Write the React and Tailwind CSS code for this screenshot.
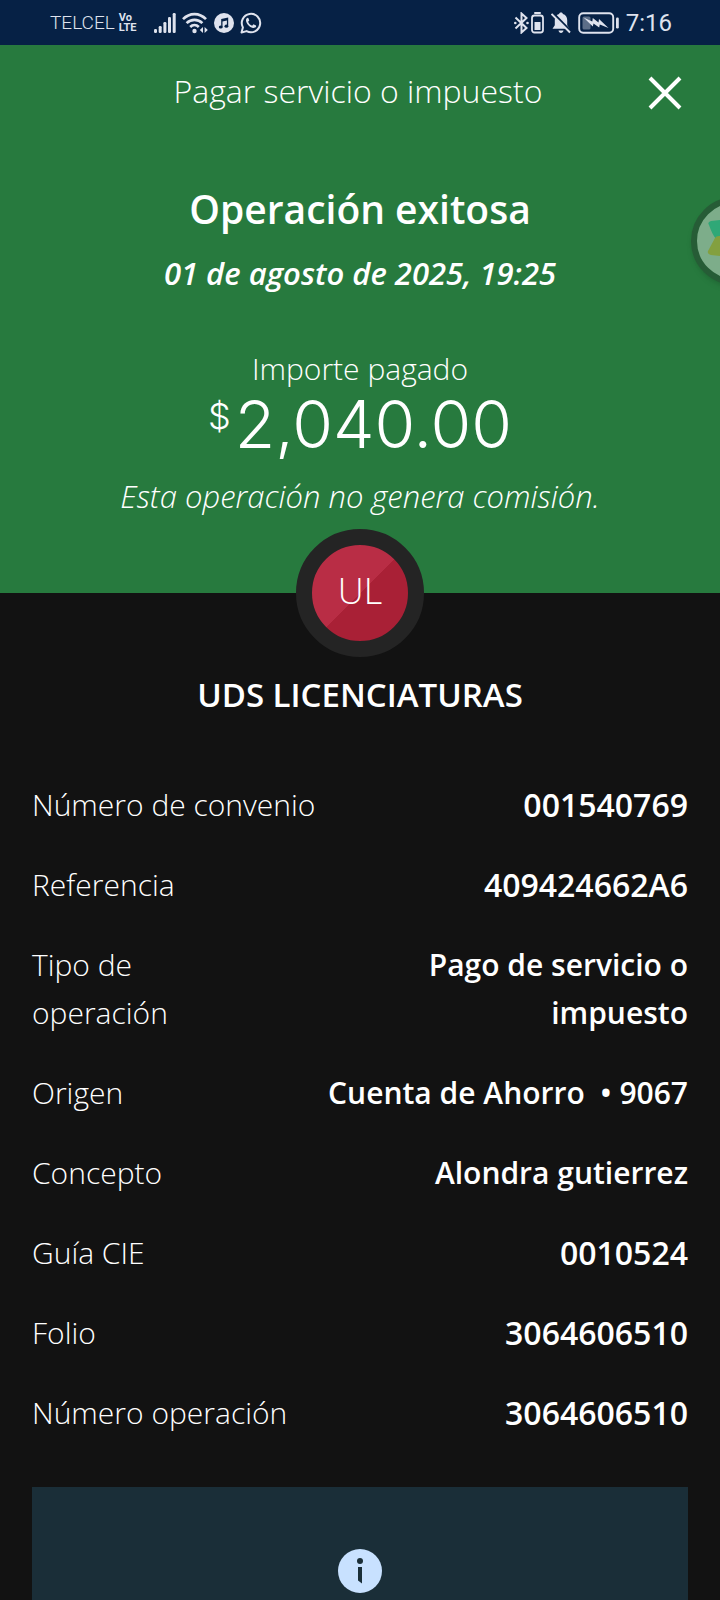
import React from "react";
import clsx from "clsx";

const details = [
  { label: "Número de convenio", value: "001540769", numeric: true },
  { label: "Referencia", value: "409424662A6", numeric: true },
  { label: "Tipo de operación", value: "Pago de servicio o impuesto" },
  { label: "Origen", value: "Cuenta de Ahorro \u00a0• 9067" },
  { label: "Concepto", value: "Alondra gutierrez" },
  { label: "Guía CIE", value: "0010524", numeric: true },
  { label: "Folio", value: "3064606510", numeric: true },
  { label: "Número operación", value: "3064606510", numeric: true },
];

function SignalIcon() {
  return (
    <svg width="22" height="22" viewBox="0 0 22 22" fill="currentColor">
      <rect x="0" y="17" width="3" height="4" rx="1.2" />
      <rect x="4.7" y="14" width="3" height="7" rx="1.2" />
      <rect x="9.4" y="10" width="3" height="11" rx="1.2" />
      <rect x="14" y="5" width="3" height="16" rx="1.2" />
      <rect x="18.7" y="1" width="3" height="20" rx="1.2" />
    </svg>
  );
}

function WifiIcon() {
  return (
    <svg width="26" height="22" viewBox="0 0 26 22" fill="none" stroke="currentColor" strokeWidth="2.6">
      <path d="M1 7.2C7.5.4 17.5.4 24 7.2" />
      <path d="M4.6 11.2c4.5-4.5 11.3-4.5 15.8 0" />
      <path d="M8.2 15c2.5-2.6 6.1-2.6 8.6 0" />
      <circle cx="12.5" cy="19" r="2.2" fill="currentColor" stroke="none" />
      <path d="M21 15v6l-3.2-3zM22.6 15v6l3.2-3z" fill="currentColor" stroke="none" />
    </svg>
  );
}

function MusicIcon() {
  return (
    <svg width="20" height="22" viewBox="0 0 20 22">
      <circle cx="10" cy="11" r="10" fill="currentColor" />
      <g fill="#062145">
        <path d="M7.2 7l7-1.6v8.8h-1.3V8.6l-4.4 1v5.8H7.2z" />
        <ellipse cx="6.7" cy="15" rx="1.9" ry="1.6" />
        <ellipse cx="12.4" cy="14.2" rx="1.9" ry="1.6" />
      </g>
    </svg>
  );
}

function WhatsAppIcon() {
  return (
    <svg width="22" height="22" viewBox="0 0 22 22" fill="none" stroke="currentColor" strokeWidth="2">
      <path d="M1.5 20.5l1.4-5.1A9.2 9.2 0 1 1 6.6 19.1z" strokeLinejoin="round" />
      <path
        d="M7.5 5.8c-1.4.7-1.9 2.3-1.2 4.1 1 2.7 3.2 4.9 5.9 5.9 1.8.6 3.4 0 4-1.3l-.2-1-2.5-1.2-1.4 1.4c-1.9-.8-3.3-2.2-4-4l1.2-1.3-1-2.5z"
        fill="currentColor"
        stroke="none"
      />
    </svg>
  );
}

function BluetoothIcon() {
  return (
    <svg width="15" height="22" viewBox="0 0 15 22" fill="none" stroke="currentColor" strokeWidth="2">
      <path d="M1.5 5.5l11 10.5L7.5 20.5v-19L12.5 6l-11 10.5" />
      <circle cx="1.3" cy="11" r="1.3" fill="currentColor" stroke="none" />
      <circle cx="13.5" cy="11" r="1.3" fill="currentColor" stroke="none" />
    </svg>
  );
}

function DeviceBatteryIcon() {
  return (
    <svg width="13" height="22" viewBox="0 0 13 22">
      <rect x="3" y="0" width="7" height="2" rx="1" fill="currentColor" />
      <rect x="1" y="3.5" width="11" height="17" rx="2.5" fill="none" stroke="currentColor" strokeWidth="1.8" />
      <rect x="3.5" y="10" width="6" height="8" fill="currentColor" />
    </svg>
  );
}

function BellOffIcon() {
  return (
    <svg width="20" height="22" viewBox="0 0 20 22">
      <path
        d="M10 .5c1.2 0 1.8.6 1.9 1.5 2.8.8 4.3 3 4.3 6v5.2l2.3 3.5H1.5l2.3-3.5V8c0-3 1.5-5.2 4.3-6C8.2 1.100 8.8.5 10 .5zM7.5 18.500h5c-.3 1.600-1.200 2.500-2.500 2.500s-2.200-.9-2.500-2.500z"
        fill="currentColor"
      />
      <path d="M1.5 1l18 18.5" stroke="#062145" strokeWidth="3" />
      <path d="M.5 2l18.5 18.5" stroke="currentColor" strokeWidth="1.9" />
    </svg>
  );
}

function ChargingIcon() {
  return (
    <svg width="41" height="22" viewBox="0 0 41 22">
      <rect x="1.2" y="1.2" width="34" height="19.6" rx="4" fill="none" stroke="currentColor" strokeWidth="1.9" />
      <rect x="4.5" y="4.5" width="8" height="13" rx="1.5" fill="currentColor" opacity=".4" />
      <path d="M5.5 5.5l8.8 4 .5-3.5 5.7 4.5.5-3.5 9.5 9-8.7-3.5-.6 3-5.7-4-.7 3z" fill="currentColor" />
      <rect x="38" y="5.5" width="2.8" height="11" rx="1.2" fill="currentColor" />
    </svg>
  );
}

function StatusBar() {
  return (
    <div className="flex h-[45px] shrink-0 items-center justify-between bg-[#062145] pr-12 pl-[50px] font-['Roboto',sans-serif] text-[#dfe3ee]">
      <div className="flex items-center">
        <span className="text-[19px] leading-6 font-light">TELCEL</span>
        <span className="ml-1 flex flex-col text-[11px] leading-[10px] font-bold">
          <span>Vo</span>
          <span>LTE</span>
        </span>
        <div className="ml-[18px] flex items-center gap-[6px]">
          <SignalIcon />
          <WifiIcon />
          <MusicIcon />
          <WhatsAppIcon />
        </div>
      </div>
      <div className="flex items-center gap-[7px]">
        <div className="flex items-center gap-[2px]">
          <BluetoothIcon />
          <DeviceBatteryIcon />
        </div>
        <BellOffIcon />
        <ChargingIcon />
        <span className="text-[24px] leading-6">7:16</span>
      </div>
    </div>
  );
}

// Floating shortcut that peeks in from the right edge of the screen
function FloatingBubble() {
  return (
    <div className="absolute top-[197px] -right-[59px] size-[88px] overflow-hidden rounded-full border-[6px] border-[#265c36] bg-[#7dad8a] shadow-md shadow-black/10">
      <svg width="76" height="76" viewBox="0 0 76 76">
        <path d="M12 22q-2-3 2-4l20-2v20H19q-4-5-7-14z" fill="#2fa877" />
        <path d="M18 35q1-2 4-2h20v22l-28-3q-4-1-3-4z" fill="#83a03f" />
      </svg>
    </div>
  );
}

function Summary() {
  return (
    <header className="flex shrink-0 flex-col items-center bg-[#277a3e] pb-[73px] text-center">
      <div className="grid h-24 w-full grid-cols-[106px_1fr_110px] items-center">
        <h1 className="col-start-2 pb-1 text-[32px] leading-10 font-light">Pagar servicio o impuesto</h1>
        <button type="button" aria-label="Cerrar" className="flex h-12 items-center justify-center">
          <svg width="34" height="34" viewBox="0 0 34 34" stroke="currentColor" strokeWidth="4">
            <path d="M2 2l30 30M32 2L2 32" />
          </svg>
        </button>
      </div>
      <h2 className="mt-11 text-[39px] leading-12 font-semibold">Operación exitosa</h2>
      <p className="mt-4 text-[31px] leading-12 font-semibold italic">01 de agosto de 2025, 19:25</p>
      <p className="mt-[52px] text-[30px] leading-10 font-light">Importe pagado</p>
      <p className="mt-[3px] flex items-start gap-1 font-['Inter',sans-serif] font-light">
        <span className="text-[36px] leading-12">$</span>
        <span className="text-[66px] leading-16">2,040.00</span>
      </p>
      <p className="mt-4 text-[31px] leading-12 font-light italic">Esta operación no genera comisión.</p>
    </header>
  );
}

function DetailRow({ label, value, numeric }) {
  return (
    <div className="flex justify-between gap-8">
      <dt className="font-light">{label}</dt>
      <dd className={clsx("text-right leading-12 font-semibold", numeric && "text-[32px]")}>{value}</dd>
    </div>
  );
}

export default function App() {
  return (
    <div className="relative flex h-screen flex-col overflow-hidden bg-[#121212] font-['Open_Sans',sans-serif] text-white">
      <StatusBar />
      <Summary />
      <FloatingBubble />
      <main className="flex grow flex-col px-8">
        <div className="relative z-10 -mt-16 flex size-32 shrink-0 items-center justify-center self-center rounded-full border-16 border-[#242424] bg-[linear-gradient(135deg,#b92d45_50%,#a92036_50%)] bg-origin-border pb-1 text-[36px] font-light">
          UL
        </div>
        <h3 className="mt-[14px] text-center text-[33px] leading-12 font-semibold">UDS LICENCIATURAS</h3>
        <dl className="mt-[62px] flex flex-col gap-8 text-[30px] leading-12">
          {details.map((detail) => (
            <DetailRow key={detail.label} {...detail} />
          ))}
        </dl>
        <section aria-label="Información" className="mt-[50px] flex grow justify-center bg-[#1a2e38] pt-[62px]">
          <svg width="44" height="44" viewBox="0 0 44 44">
            <circle cx="22" cy="22" r="22" fill="#c8e1ff" />
            <circle cx="22" cy="12" r="3" fill="#1a2e38" />
            <path d="M20 18h4v16.5l-4-3z" fill="#1a2e38" />
          </svg>
        </section>
      </main>
    </div>
  );
}
